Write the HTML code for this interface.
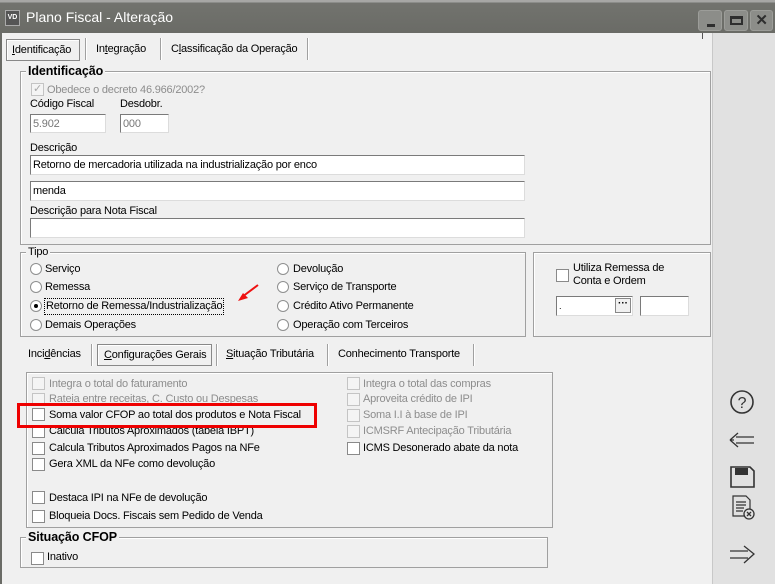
<!DOCTYPE html>
<html><head><meta charset="utf-8"><style>
*{margin:0;padding:0;box-sizing:border-box}
body{width:775px;height:584px;overflow:hidden;background:#f0f0f0;font-family:"Liberation Sans",sans-serif;font-size:11px;line-height:15px;letter-spacing:-0.2px;color:#000;position:relative}
.a{position:absolute;white-space:nowrap}
.gb{position:absolute;border:1px solid #a0a0a0;box-shadow:inset 1px 1px 0 #fff}
.gl{position:absolute;background:#f0f0f0;padding:0 2px;line-height:13px}
.in{position:absolute;background:#fff;border:1px solid #7a7a7a;border-right-color:#dcdcdc;border-bottom-color:#dcdcdc;padding:2px 2px;font-size:11px;line-height:14px}
.cb{position:absolute;width:13px;height:13px;background:#fff;border:1px solid #8a8a8a}
.cb.d{background:#f4f4f4;border-color:#c4c4c4}
.rd{position:absolute;width:12px;height:12px;border-radius:50%;background:#fff;border:1px solid #8e8f8f}
.g{color:#8d8d8d}
.sep{position:absolute;width:1px;background:#a0a0a0;box-shadow:1px 0 0 #fff}
</style></head><body>
<div class="a" style="left:0;top:0;width:775px;height:33px;background:linear-gradient(#a7a7a5 0,#a7a7a5 2px,#72736e 3px,#6a6b66 100%)"></div>
<div class="a" style="left:5px;top:10px;width:15px;height:16px;background:#555;border:1px solid #aaa;color:#fff;font-size:7px;line-height:14px;text-align:center;font-weight:bold;letter-spacing:0">VD</div>
<div class="a" style="left:26px;top:10px;color:#fff;font-size:14px;letter-spacing:0">Plano Fiscal - Alteração</div>
<div class="a" style="left:698px;top:10px;width:24px;height:21px;background:#8c8d89;border:1px solid #9c9d99;border-radius:3px"><div class="a" style="left:8px;top:13px;width:8px;height:3px;background:#2e2e2e"></div></div>
<div class="a" style="left:724px;top:10px;width:24px;height:21px;background:#8c8d89;border:1px solid #9c9d99;border-radius:3px"><div class="a" style="left:5px;top:5px;width:13px;height:9px;border:2px solid #2e2e2e;border-top-width:3px"></div></div>
<div class="a" style="left:750px;top:10px;width:23px;height:21px;background:#8c8d89;border:1px solid #9c9d99;border-radius:3px;color:#2e2e2e;font-weight:bold;font-size:15px;text-align:center;line-height:19px">✕</div>
<div class="a" style="left:0;top:33px;width:2px;height:551px;background:#6a6b66"></div>
<div class="a" style="left:712px;top:33px;width:63px;height:551px;background:#e1e1e1;border-left:1px solid #c8c8c8"></div>
<div class="a" style="left:702px;top:33px;width:1px;height:6px;background:#555"></div>

<div class="a" style="left:6px;top:39px;width:74px;height:22px;border:1px solid #888;box-shadow:inset 1px 1px 0 #fff"></div>
<div class="a" style="left:12px;top:43px"><u>I</u>dentificação</div>
<div class="sep" style="left:85px;top:38px;height:22px"></div>
<div class="a" style="left:96px;top:42px">In<u>t</u>egração</div>
<div class="sep" style="left:160px;top:38px;height:22px"></div>
<div class="a" style="left:171px;top:42px">C<u>l</u>assificação da Operação</div>
<div class="sep" style="left:307px;top:38px;height:22px"></div>

<div class="gb" style="left:20px;top:71px;width:691px;height:174px"></div>
<div class="gl" style="left:26px;top:65px;font-weight:bold;font-size:12.5px;letter-spacing:-0.1px">Identificação</div>
<div class="cb d" style="left:31px;top:83px;color:#a8a8a8;font-size:11px;line-height:11px;text-align:center">✓</div>
<div class="a g" style="left:47px;top:83px">Obedece o decreto 46.966/2002?</div>
<div class="a" style="left:30px;top:97px">Código Fiscal</div>
<div class="a" style="left:120px;top:97px">Desdobr.</div>
<div class="in g" style="left:30px;top:114px;width:76px;height:19px;color:#777">5.902</div>
<div class="in" style="left:120px;top:114px;width:49px;height:19px;color:#777">000</div>
<div class="a" style="left:30px;top:141px">Descrição</div>
<div class="in" style="left:30px;top:155px;width:495px;height:20px">Retorno de mercadoria utilizada na industrialização por enco</div>
<div class="in" style="left:30px;top:181px;width:495px;height:20px">menda</div>
<div class="a" style="left:30px;top:204px">Descrição para Nota Fiscal</div>
<div class="in" style="left:30px;top:218px;width:495px;height:20px"></div>

<div class="gb" style="left:20px;top:252px;width:506px;height:85px"></div>
<div class="gl" style="left:26px;top:246px">Tipo</div>
<div class="rd" style="left:30px;top:263px"></div><div class="a" style="left:45px;top:262px">Serviço</div>
<div class="rd" style="left:30px;top:281px"></div><div class="a" style="left:45px;top:280px">Remessa</div>
<div class="rd" style="left:30px;top:300px"><div class="a" style="left:3px;top:3px;width:4px;height:4px;border-radius:50%;background:#000"></div></div>
<div class="a" style="left:44px;top:298px;border:1px dotted #000;padding:0 1px">Retorno de Remessa/Industrialização</div>
<div class="rd" style="left:30px;top:319px"></div><div class="a" style="left:45px;top:318px">Demais Operações</div>
<div class="rd" style="left:277px;top:263px"></div><div class="a" style="left:293px;top:262px">Devolução</div>
<div class="rd" style="left:277px;top:281px"></div><div class="a" style="left:293px;top:280px">Serviço de Transporte</div>
<div class="rd" style="left:277px;top:300px"></div><div class="a" style="left:293px;top:299px">Crédito Ativo Permanente</div>
<div class="rd" style="left:277px;top:319px"></div><div class="a" style="left:293px;top:318px">Operação com Terceiros</div>
<svg class="a" style="left:236px;top:283px" width="24" height="20"><line x1="22" y1="2" x2="6" y2="14" stroke="#ee1111" stroke-width="2"/><polygon points="2,18 12,15 7,10" fill="#ee1111"/></svg>

<div class="gb" style="left:533px;top:252px;width:178px;height:85px"></div>
<div class="cb" style="left:556px;top:269px"></div>
<div class="a" style="left:573px;top:262px;line-height:13px">Utiliza Remessa de<br>Conta e Ordem</div>
<div class="in" style="left:556px;top:296px;width:77px;height:20px;font-size:9px">.</div>
<div class="a" style="left:615px;top:298px;width:16px;height:15px;background:#f0f0f0;border:1px solid #888;font-size:10px;line-height:10px;text-align:center;font-weight:bold;letter-spacing:0">···</div>
<div class="in" style="left:640px;top:296px;width:49px;height:20px"></div>

<div class="a" style="left:28px;top:347px">Inci<u>d</u>ências</div>
<div class="sep" style="left:91px;top:344px;height:22px"></div>
<div class="a" style="left:97px;top:344px;width:115px;height:22px;border:1px solid #888;box-shadow:inset 1px 1px 0 #fff"></div>
<div class="a" style="left:104px;top:348px"><u>C</u>onfigurações Gerais</div>
<div class="sep" style="left:216px;top:344px;height:22px"></div>
<div class="a" style="left:226px;top:347px"><u>S</u>ituação Tributária</div>
<div class="sep" style="left:327px;top:344px;height:22px"></div>
<div class="a" style="left:338px;top:347px">Conhecimento Transporte</div>
<div class="sep" style="left:473px;top:344px;height:22px"></div>

<div class="gb" style="left:26px;top:372px;width:527px;height:156px"></div>
<div class="cb d" style="left:32px;top:377px"></div><div class="a g" style="left:49px;top:377px">Integra o total do faturamento</div>
<div class="cb d" style="left:32px;top:393px"></div><div class="a g" style="left:49px;top:392px">Rateia entre receitas, C. Custo ou Despesas</div>
<div class="cb" style="left:32px;top:408px"></div><div class="a" style="left:49px;top:408px">Soma valor CFOP ao total dos produtos e Nota Fiscal</div>
<div class="cb" style="left:32px;top:425px"></div><div class="a" style="left:49px;top:424px">Calcula Tributos Aproximados (tabela IBPT)</div>
<div class="cb" style="left:32px;top:442px"></div><div class="a" style="left:49px;top:441px">Calcula Tributos Aproximados Pagos na NFe</div>
<div class="cb" style="left:32px;top:458px"></div><div class="a" style="left:49px;top:457px">Gera XML da NFe como devolução</div>
<div class="cb" style="left:32px;top:491px"></div><div class="a" style="left:49px;top:491px">Destaca IPI na NFe de devolução</div>
<div class="cb" style="left:32px;top:510px"></div><div class="a" style="left:49px;top:509px">Bloqueia Docs. Fiscais sem Pedido de Venda</div>
<div class="cb d" style="left:347px;top:377px"></div><div class="a g" style="left:363px;top:377px">Integra o total das compras</div>
<div class="cb d" style="left:347px;top:393px"></div><div class="a g" style="left:363px;top:392px">Aproveita crédito de IPI</div>
<div class="cb d" style="left:347px;top:409px"></div><div class="a g" style="left:363px;top:408px">Soma I.I à base de IPI</div>
<div class="cb d" style="left:347px;top:425px"></div><div class="a g" style="left:363px;top:424px">ICMSRF Antecipação Tributária</div>
<div class="cb" style="left:347px;top:442px"></div><div class="a" style="left:363px;top:441px">ICMS Desonerado abate da nota</div>
<div class="a" style="left:17px;top:403px;width:300px;height:25px;border:3px solid #ee0000"></div>

<div class="gb" style="left:20px;top:537px;width:528px;height:31px"></div>
<div class="gl" style="left:26px;top:531px;font-weight:bold;font-size:12.5px;letter-spacing:-0.1px">Situação CFOP</div>
<div class="cb" style="left:31px;top:552px"></div><div class="a" style="left:47px;top:550px">Inativo</div>

<svg class="a" style="left:726px;top:388px" width="34" height="184" fill="none" stroke="#333" stroke-width="1.6">
<circle cx="16" cy="14" r="11"/>
<text x="16" y="20" font-family="Liberation Sans" font-size="16" text-anchor="middle" fill="#333" stroke="none">?</text>
<path d="M4 52 L12 45 M4 52 L12 59 M4 52 H8 M10 49 H28 M10 55 H28" stroke-width="1.3"/>
<path d="M5 79 H24 L28 83 V99 H5 Z" stroke-width="1.6"/>
<rect x="9" y="80" width="13" height="7" fill="#333" stroke="none"/>
<path d="M7 108 H20 L24 112 V128 H7 Z M10 114 H20 M10 117 H20 M10 120 H18 M10 123 H17" stroke-width="1.2"/>
<circle cx="23" cy="126" r="5" fill="#e1e1e1" stroke-width="1.3"/>
<path d="M21 124 L25 128 M25 124 L21 128" stroke-width="1.3"/>
<path d="M4 163 H22 M4 170 H22 M18 158 L28 166 L18 175" stroke-width="1.3"/>
</svg>
</body></html>
